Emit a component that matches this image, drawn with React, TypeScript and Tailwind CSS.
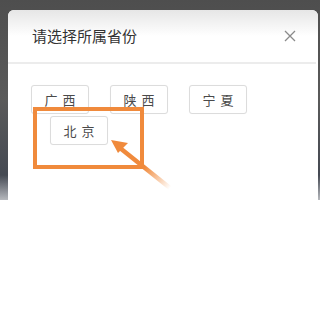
import React from "react";

const font = { fontFamily: '"Noto Sans CJK SC", "Noto Sans", sans-serif' };

function Btn({ label, className = "" }: { label: string; className?: string }) {
  return (
    <div
      className={
        "flex h-[29px] w-[58px] items-center justify-center rounded-[3px] border border-[#dcdcdc] bg-white text-[13px] tracking-[5px] pl-[5px] text-[#4a4a4a] shadow-[0_0_1px_rgba(0,0,0,0.05)] " +
        className
      }
    >
      {label}
    </div>
  );
}

export default function App() {
  return (
    <div className="relative h-[328px] w-[320px] overflow-hidden bg-white" style={font}>
      <div className="absolute left-0 top-0 h-[200px] w-[320px] bg-gradient-to-b from-[#4e4e4e] via-[#5a5a5a] to-[#3e4450]" />
      <div className="absolute left-0 top-[175px] h-[40px] w-[320px] bg-gradient-to-b from-transparent to-white" />
      <div className="relative ml-[8px] mt-[10px] h-[318px] w-[310px] rounded-t-[6px] bg-white">
        <div className="flex h-[52px] flex-col rounded-t-[6px] bg-gradient-to-b from-[#e6e6e6] via-white to-white">
          <div className="flex h-[52px] items-center justify-between pl-[24px] pr-[20px]">
            <span className="text-[15px] text-[#333]">请选择所属省份</span>
            <svg width="12" height="12" viewBox="0 0 12 12" className="mr-[2px]">
              <path d="M1 1L11 11M11 1L1 11" stroke="#8a8a8a" strokeWidth="1.3" fill="none" />
            </svg>
          </div>
        </div>
        <div className="mr-[2px] h-[2px] bg-[#ececec]" />
        <div className="flex gap-[21px] pl-[23px] pt-[21px]">
          <Btn label="广西" />
          <Btn label="陕西" />
          <Btn label="宁夏" />
        </div>
        <div className="pl-[42px] pt-[2px]">
          <Btn label="北京" />
        </div>
      </div>
      <div className="absolute left-[33px] top-[107px] h-[62px] w-[111px] border-[4px] border-[#f08a3c]" />
      <svg className="absolute left-0 top-0" width="320" height="328" viewBox="0 0 320 328">
        <defs>
          <linearGradient id="g" x1="113" y1="142" x2="170" y2="188" gradientUnits="userSpaceOnUse">
            <stop offset="0" stopColor="#f08a3c" />
            <stop offset="0.55" stopColor="#f08a3c" />
            <stop offset="1" stopColor="#f08a3c" stopOpacity="0" />
          </linearGradient>
        </defs>
        <path d="M120 148L170 188" stroke="url(#g)" strokeWidth="4.5" strokeLinecap="round" />
        <path d="M111 140L128 143L118 153Z" fill="#f08a3c" />
      </svg>
    </div>
  );
}
